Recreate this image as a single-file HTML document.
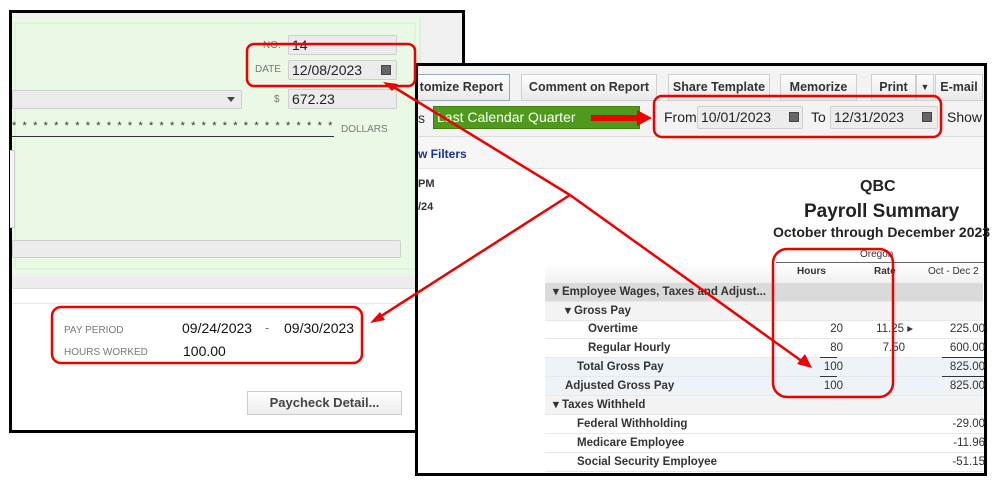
<!DOCTYPE html>
<html><head><meta charset="utf-8"><style>
*{margin:0;padding:0;box-sizing:border-box}
body{width:998px;height:493px;background:#fff;position:relative;overflow:hidden;font-family:"Liberation Sans",Arial,sans-serif}
.a{position:absolute}
.fld{position:absolute;background:#ececec;border:1px solid #cfcfcf;border-radius:2px;font-size:14px;color:#222;padding-left:3px;line-height:18px}
.lbl{position:absolute;font-size:10px;color:#777}
.btn{position:absolute;top:74px;height:27px;background:linear-gradient(#fdfdfd,#e9e9e9);border:1px solid #cfcfcf;font-size:12.5px;font-weight:bold;color:#333;text-align:center;line-height:25px;white-space:nowrap;overflow:hidden}
.cal{position:absolute;width:10px;height:10px;background:#666;border:1px solid #444}
.row{position:absolute;left:545px;width:438px;height:19px;font-size:11.5px;font-weight:bold;color:#333;line-height:19px;border-bottom:1px solid #e8e8e8}
.row span{position:absolute}
.n{text-align:right;font-weight:normal}
</style></head><body>
<!-- left window -->
<div class="a" style="left:9px;top:10px;width:456px;height:423px;border:3px solid #000;background:#fff"></div>
<div class="a" style="left:12px;top:13px;width:450px;height:264px;background:#f0f0f0"></div>
<div class="a" style="left:12px;top:18px;width:409px;height:255px;background:#eaf8e6;border-right:2px solid #dfeedd"></div>
<div class="a" style="left:14px;top:22px;width:402px;height:248px;border:2px solid #dff3da"></div>
<div class="lbl" style="left:263px;top:40px">NO.</div>
<div class="fld" style="left:288px;top:35px;width:109px;height:20px">14</div>
<div class="lbl" style="left:255px;top:64px">DATE</div>
<div class="fld" style="left:288px;top:60px;width:109px;height:20px">12/08/2023</div>
<div class="cal" style="left:381px;top:65px"></div>
<div class="fld" style="left:12px;top:90px;width:230px;height:19px"></div>
<div class="a" style="left:227px;top:97px;border:4px solid transparent;border-top:5px solid #444"></div>
<div class="lbl" style="left:274px;top:94px">$</div>
<div class="fld" style="left:288px;top:89px;width:109px;height:20px">672.23</div>
<div class="a" style="left:12px;top:120px;font-size:11px;letter-spacing:1.6px;color:#333;white-space:nowrap;width:323px;overflow:hidden">* * * * * * * * * * * * * * * * * * * * * * * * * * * * * * * * * * * * * * * * *</div>
<div class="a" style="left:12px;top:136px;width:322px;height:1px;background:#333"></div>
<div class="lbl" style="left:341px;top:124px">DOLLARS</div>
<div class="a" style="left:10px;top:150px;width:5px;height:78px;border:1px solid #ccc;border-left:none;background:#f4f4f4"></div>
<div class="fld" style="left:12px;top:240px;width:389px;height:18px"></div>
<div class="a" style="left:12px;top:277px;width:403px;height:12px;background:#ececec;border-bottom:1px solid #ddd"></div>
<div class="a" style="left:12px;top:303px;width:403px;height:125px;border-top:1px solid #e6e6e6"></div>
<div class="lbl" style="left:64px;top:325px;font-size:10px">PAY PERIOD</div>
<div class="a" style="left:182px;top:320px;font-size:14px;color:#111">09/24/2023</div>
<div class="a" style="left:265px;top:320px;font-size:13px;color:#777">-</div>
<div class="a" style="left:284px;top:320px;font-size:14px;color:#111">09/30/2023</div>
<div class="lbl" style="left:64px;top:347px">HOURS WORKED</div>
<div class="a" style="left:183px;top:343px;font-size:14px;color:#111">100.00</div>
<div class="a" style="left:247px;top:391px;width:155px;height:24px;background:linear-gradient(#fff,#ececec);border:1px solid #ccc;font-size:13px;font-weight:bold;color:#444;text-align:center;line-height:22px">Paycheck Detail...</div>

<!-- report window -->
<div class="a" style="left:415px;top:63px;width:572px;height:430px;border:3px solid #000;border-bottom:none;background:#fff"></div>
<div class="a" style="left:418px;top:66px;width:566px;height:70px;background:#f3f3f3"></div>
<div class="a" style="left:418px;top:136px;width:566px;height:33px;background:#f6f6f6;border-top:1px solid #ddd;border-bottom:1px solid #e4e4e4"></div>
<div class="a" style="left:418px;top:100px;width:566px;height:1px;background:#ddd"></div>
<div class="btn" style="left:418px;width:92px;border-color:#9ab;border-left:none;text-align:right;padding-right:6px">tomize Report</div>
<div class="btn" style="left:521px;width:136px">Comment on Report</div>
<div class="btn" style="left:668px;width:102px">Share Template</div>
<div class="btn" style="left:780px;width:77px">Memorize</div>
<div class="btn" style="left:871px;width:45px">Print</div>
<div class="btn" style="left:916px;width:18px;font-size:9px">▼</div>
<div class="btn" style="left:935px;width:48px">E-mail</div>
<div class="a" style="left:418px;top:110px;font-size:14px;color:#333">s</div>
<div class="a" style="left:433px;top:106px;width:207px;height:23px;background:#4f9a1c;border:1px solid #3f7f12;color:#fff;font-size:14px;line-height:21px;padding-left:3px">Last Calendar Quarter</div>
<div class="a" style="left:664px;top:109px;font-size:14px;color:#222">From</div>
<div class="fld" style="left:697px;top:106px;width:106px;height:23px;line-height:21px">10/01/2023</div>
<div class="cal" style="left:789px;top:112px"></div>
<div class="a" style="left:811px;top:109px;font-size:14px;color:#222">To</div>
<div class="fld" style="left:830px;top:106px;width:108px;height:23px;line-height:21px">12/31/2023</div>
<div class="cal" style="left:922px;top:112px"></div>
<div class="a" style="left:947px;top:109px;font-size:14px;color:#222">Show</div>
<div class="a" style="left:418px;top:147px;font-size:12px;font-weight:bold;color:#1d2f9a">w Filters</div>
<div class="a" style="left:418px;top:178px;font-size:11px;font-weight:bold;color:#333">PM</div>
<div class="a" style="left:418px;top:201px;font-size:11px;font-weight:bold;color:#333">/24</div>
<div class="a" style="left:860px;top:178px;font-size:16px;font-weight:bold;color:#222">QBC</div>
<div class="a" style="left:804px;top:201px;font-size:19px;font-weight:bold;color:#222;white-space:nowrap">Payroll Summary</div>
<div class="a" style="left:773px;top:224px;font-size:14px;font-weight:bold;color:#222;white-space:nowrap">October through December 2023</div>
<div class="a" style="left:860px;top:249px;font-size:10px;color:#333">Oregon</div>
<div class="a" style="left:776px;top:262px;width:208px;height:1px;background:#666"></div>
<div class="a" style="left:545px;top:263px;width:439px;height:20px;background:linear-gradient(#fff,#f0f0f0)"></div>
<div class="a" style="left:797px;top:266px;font-size:10px;font-weight:bold;color:#333">Hours</div>
<div class="a" style="left:874px;top:266px;font-size:10px;font-weight:bold;color:#333">Rate</div>
<div class="a" style="left:928px;top:266px;font-size:10px;color:#333;white-space:nowrap">Oct - Dec 2</div>
<div class="row" style="top:283px;background:#dadada"><span style="left:8px">▾ Employee Wages, Taxes and Adjust...</span></div>
<div class="row" style="top:302px;background:#f3f3f3"><span style="left:20px">▾ Gross Pay</span></div>
<div class="row" style="top:320px"><span style="left:43px">Overtime</span><span class="n" style="left:240px;width:58px">20</span><span class="n" style="left:310px;width:58px">11.25 ▸</span><span class="n" style="left:380px;width:60px">225.00</span></div>
<div class="row" style="top:339px"><span style="left:43px">Regular Hourly</span><span class="n" style="left:240px;width:58px">80</span><span class="n" style="left:310px;width:50px">7.50</span><span class="n" style="left:380px;width:60px">600.00</span></div>
<div class="row" style="top:358px;background:#eef3f7"><span style="left:32px">Total Gross Pay</span><span class="n" style="left:240px;width:58px">100</span><span class="n" style="left:380px;width:60px">825.00</span></div>
<div class="row" style="top:377px;background:#eef3f7"><span style="left:20px">Adjusted Gross Pay</span><span class="n" style="left:240px;width:58px">100</span><span class="n" style="left:380px;width:60px">825.00</span></div>
<div class="row" style="top:396px;background:#f3f3f3"><span style="left:8px">▾ Taxes Withheld</span></div>
<div class="row" style="top:415px"><span style="left:32px">Federal Withholding</span><span class="n" style="left:380px;width:60px">-29.00</span></div>
<div class="row" style="top:434px"><span style="left:32px">Medicare Employee</span><span class="n" style="left:380px;width:60px">-11.96</span></div>
<div class="row" style="top:453px"><span style="left:32px">Social Security Employee</span><span class="n" style="left:380px;width:60px">-51.15</span></div>
<div class="a" style="left:820px;top:357px;width:17px;height:1px;background:#333"></div>
<div class="a" style="left:820px;top:376px;width:17px;height:1px;background:#333"></div>
<div class="a" style="left:942px;top:357px;width:42px;height:1px;background:#333"></div>
<div class="a" style="left:942px;top:376px;width:42px;height:1px;background:#333"></div>
<div class="a" style="left:415px;top:473px;width:572px;height:3px;background:#000"></div>
<div class="a" style="left:415px;top:476px;width:572px;height:17px;background:#fff"></div>

<svg class="a" style="left:0;top:0" width="998" height="493">
<g fill="none" stroke="#e00" stroke-width="2.5">
<rect x="247" y="44" width="168" height="42" rx="7"/>
<rect x="52" y="307" width="310" height="56" rx="9"/>
<rect x="654" y="96" width="287" height="41" rx="8"/>
<rect x="773" y="249" width="120" height="148" rx="14"/>
<line x1="570" y1="195" x2="392" y2="86"/>
<line x1="570" y1="195" x2="378" y2="318"/>
<line x1="570" y1="195" x2="803" y2="362"/>
</g>
<g fill="#e00">
<polygon points="383,82 398,84 392,91"/>
<polygon points="370,323 380,312 385,320"/>
<polygon points="812,368 797,364 805,354"/>
<rect x="591" y="115" width="48" height="6"/>
<polygon points="637,110 652,118 637,126"/>
</g>
</svg>
</body></html>
